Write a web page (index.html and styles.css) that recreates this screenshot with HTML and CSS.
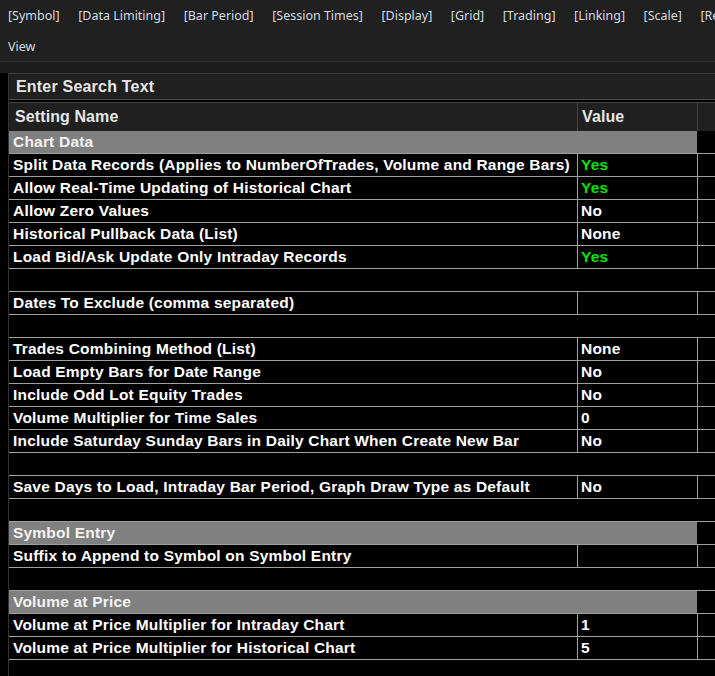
FILE: index.html
```html
<!DOCTYPE html>
<html>
<head>
<meta charset="utf-8">
<link rel="stylesheet" href="styles.css">
</head>
<body>
<div class="toolbar">
  <div class="tabs">
    <span>[Symbol]</span><span>[Data Limiting]</span><span>[Bar Period]</span><span>[Session Times]</span><span>[Display]</span><span>[Grid]</span><span>[Trading]</span><span>[Linking]</span><span>[Scale]</span><span>[Renko]</span>
  </div>
  <div class="tabs"><span>View</span></div>
</div>
<div class="gap"></div>
<div class="panel">
  <div class="search">Enter Search Text</div>
  <div class="header">
    <div class="hname">Setting Name</div>
    <div class="hval">Value</div>
    <div class="hrest"></div>
  </div>
  <div class="grid">
    <div class="row section"><div class="sec">Chart Data</div><div class="rest"></div></div>
    <div class="row"><div class="name">Split Data Records (Applies to NumberOfTrades, Volume and Range Bars)</div><div class="val yes">Yes</div><div class="rest"></div></div>
    <div class="row"><div class="name">Allow Real-Time Updating of Historical Chart</div><div class="val yes">Yes</div><div class="rest"></div></div>
    <div class="row"><div class="name">Allow Zero Values</div><div class="val">No</div><div class="rest"></div></div>
    <div class="row"><div class="name">Historical Pullback Data (List)</div><div class="val">None</div><div class="rest"></div></div>
    <div class="row"><div class="name">Load Bid/Ask Update Only Intraday Records</div><div class="val yes">Yes</div><div class="rest"></div></div>
    <div class="row empty"></div>
    <div class="row"><div class="name">Dates To Exclude (comma separated)</div><div class="val"></div><div class="rest"></div></div>
    <div class="row empty"></div>
    <div class="row"><div class="name">Trades Combining Method (List)</div><div class="val">None</div><div class="rest"></div></div>
    <div class="row"><div class="name">Load Empty Bars for Date Range</div><div class="val">No</div><div class="rest"></div></div>
    <div class="row"><div class="name">Include Odd Lot Equity Trades</div><div class="val">No</div><div class="rest"></div></div>
    <div class="row"><div class="name">Volume Multiplier for Time Sales</div><div class="val">0</div><div class="rest"></div></div>
    <div class="row"><div class="name">Include Saturday Sunday Bars in Daily Chart When Create New Bar</div><div class="val">No</div><div class="rest"></div></div>
    <div class="row empty"></div>
    <div class="row"><div class="name">Save Days to Load, Intraday Bar Period, Graph Draw Type as Default</div><div class="val">No</div><div class="rest"></div></div>
    <div class="row empty"></div>
    <div class="row section"><div class="sec">Symbol Entry</div><div class="rest"></div></div>
    <div class="row"><div class="name">Suffix to Append to Symbol on Symbol Entry</div><div class="val"></div><div class="rest"></div></div>
    <div class="row empty"></div>
    <div class="row section"><div class="sec">Volume at Price</div><div class="rest"></div></div>
    <div class="row"><div class="name">Volume at Price Multiplier for Intraday Chart</div><div class="val">1</div><div class="rest"></div></div>
    <div class="row"><div class="name">Volume at Price Multiplier for Historical Chart</div><div class="val">5</div><div class="rest"></div></div>
  </div>
</div>
</body>
</html>
```

FILE: styles.css
```css
html, body {
  margin: 0;
  padding: 0;
  background: #000;
  width: 715px;
  height: 676px;
  overflow: hidden;
}
body {
  display: flex;
  flex-direction: column;
}
.toolbar {
  background: #202020;
  height: 61px;
  border-bottom: 1px solid #2c2c2c;
  padding-left: 8px;
  box-sizing: content-box;
}
.tabs {
  display: flex;
  gap: 18.5px;
  height: 31px;
  align-items: center;
  white-space: nowrap;
  overflow: hidden;
  font-family: "Noto Sans", "Open Sans", sans-serif;
  font-size: 12.5px;
  color: #d6dbe0;
}
.gap {
  height: 11px;
  background: #1d1d1d;
}
.panel {
  flex: 1;
  margin-left: 8px;
  border-left: 1px solid #333;
  background: #000;
  font-family: "Liberation Sans", Arial, sans-serif;
  font-weight: bold;
}
.search {
  height: 25px;
  background: #202020;
  border-top: 1px solid #3a3a3a;
  border-bottom: 1px solid #4c4c4c;
  font-size: 16px;
  color: #e6e6e6;
  line-height: 25px;
  padding-left: 7px;
  letter-spacing: 0.2px;
}
.header {
  margin-top: 2px;
  display: grid;
  grid-template-columns: 568px 120px 1fr;
  height: 28px;
  background: #202020;
  border-top: 1px solid #444;
  font-size: 16px;
  color: #e6e6e6;
  letter-spacing: 0.1px;
}
.hname {
  padding-left: 6px;
  line-height: 28px;
}
.hval {
  border-left: 1px solid #444;
  padding-left: 4px;
  line-height: 28px;
}
.hrest {
  border-left: 1px solid #444;
}
.row {
  display: grid;
  grid-template-columns: 568px 120px 1fr;
  height: 22px;
  border-bottom: 1px solid #a0a0a0;
  font-size: 15.5px;
  color: #fff;
  line-height: 22px;
  letter-spacing: 0.2px;
  white-space: nowrap;
}
.row.empty {
  display: block;
}
.name {
  padding-left: 4px;
  overflow: hidden;
}
.val {
  border-left: 1px solid #a0a0a0;
  padding-left: 3px;
}
.val.yes {
  color: #00e600;
}
.rest {
  border-left: 1px solid #a0a0a0;
}
.section .sec {
  grid-column: 1 / span 2;
  background: #808080;
  color: #f4f4f4;
  padding-left: 4px;
}
.section .rest {
  border-left: none;
}
```
